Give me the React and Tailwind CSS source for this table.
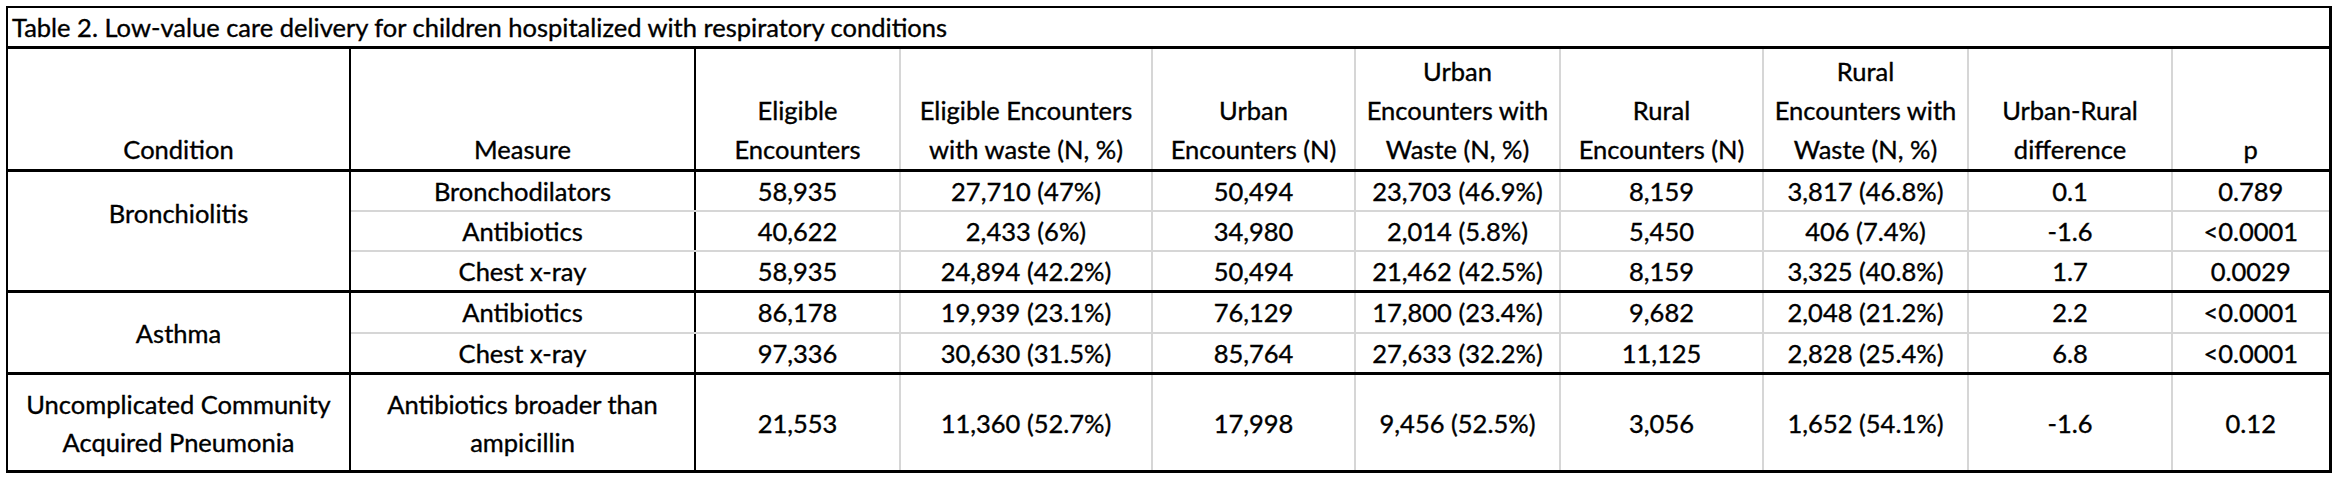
import React from 'react';

const GROUPS = [
  {
    condition: ['Bronchiolitis'],
    top: true,
    rows: [
      [['Bronchodilators'], '58,935', '27,710 (47%)', '50,494', '23,703 (46.9%)', '8,159', '3,817 (46.8%)', '0.1', '0.789'],
      [['Antibiotics'], '40,622', '2,433 (6%)', '34,980', '2,014 (5.8%)', '5,450', '406 (7.4%)', '-1.6', '<0.0001'],
      [['Chest x-ray'], '58,935', '24,894 (42.2%)', '50,494', '21,462 (42.5%)', '8,159', '3,325 (40.8%)', '1.7', '0.0029'],
    ],
    h: 'h-[40px]',
  },
  {
    condition: ['Asthma'],
    rows: [
      [['Antibiotics'], '86,178', '19,939 (23.1%)', '76,129', '17,800 (23.4%)', '9,682', '2,048 (21.2%)', '2.2', '<0.0001'],
      [['Chest x-ray'], '97,336', '30,630 (31.5%)', '85,764', '27,633 (32.2%)', '11,125', '2,828 (25.4%)', '6.8', '<0.0001'],
    ],
    h: 'h-[41px]',
  },
  {
    condition: ['Uncomplicated Community', 'Acquired Pneumonia'],
    rows: [
      [['Antibiotics broader than', 'ampicillin'], '21,553', '11,360 (52.7%)', '17,998', '9,456 (52.5%)', '3,056', '1,652 (54.1%)', '-1.6', '0.12'],
    ],
    h: 'h-[98px]',
  },
];

const HEADERS = [
  ['Condition'],
  ['Measure'],
  ['Eligible', 'Encounters'],
  ['Eligible Encounters', 'with waste (N, %)'],
  ['Urban', 'Encounters (N)'],
  ['Urban', 'Encounters with', 'Waste (N, %)'],
  ['Rural', 'Encounters (N)'],
  ['Rural', 'Encounters with', 'Waste (N, %)'],
  ['Urban-Rural', 'difference'],
  ['p'],
];

const WIDTHS = ['w-[343px]', 'w-[345px]', 'w-[205px]', 'w-[252px]', 'w-[203px]', 'w-[205px]', 'w-[203px]', 'w-[205px]', 'w-[204px]', 'w-[158px]'];

function Lines({ lines }) {
  return lines.map((l, i) => (
    <React.Fragment key={i}>
      {i > 0 && <br />}
      {l}
    </React.Fragment>
  ));
}

export default function App() {
  return (
    <div className="bg-white w-[2338px] h-[488px] pl-[6px] pt-[6px] text-black font-['Lato',sans-serif] text-[25.5px] [-webkit-text-stroke:0.35px_black]">
      <table className="table-fixed border-collapse w-[2325px] border-l-2 border-t-2 border-r-[3px] border-b-[3px] border-black">
        <colgroup>
          {WIDTHS.map((w, i) => (
            <col key={i} className={w} />
          ))}
        </colgroup>
        <tbody>
          {/* title row */}
          <tr className="h-[40px]">
            <td colSpan={10} className="border-b-[3px] border-black pl-[4px] text-left align-middle leading-[38px]">
              Table 2. Low-value care delivery for children hospitalized with respiratory conditions
            </td>
          </tr>

          {/* header */}
          <tr className="h-[123px]">
            {HEADERS.map((h, i) => (
              <td
                key={i}
                className={
                  'align-bottom text-center leading-[39px] border-b-[3px] border-b-black ' +
                  (i < 2 ? 'border-r-2 border-r-black' : 'border-r-2 border-r-[#d6d6d6]')
                }
              >
                <Lines lines={h} />
              </td>
            ))}
          </tr>

          {GROUPS.map((g, gi) =>
            g.rows.map((r, ri) => {
              const last = ri === g.rows.length - 1;
              const bottom = last ? 'border-b-[3px] border-b-black' : 'border-b-2 border-b-[#d6d6d6]';
              return (
                <tr key={gi + '-' + ri} className={g.h}>
                  {ri === 0 && (
                    <td
                      rowSpan={g.rows.length}
                      className={
                        'text-center border-r-2 border-r-black border-b-[3px] border-b-black leading-[38px] ' +
                        (g.top ? 'align-top pt-[22px]' : 'align-middle')
                      }
                    >
                      <Lines lines={g.condition} />
                    </td>
                  )}
                  <td className={'text-center align-middle leading-[38px] border-r-2 border-r-black ' + bottom}>
                    <Lines lines={r[0]} />
                  </td>
                  {r.slice(1).map((v, vi) => (
                    <td
                      key={vi}
                      className={'text-center align-middle leading-[38px] border-r-2 border-r-[#d6d6d6] ' + bottom}
                    >
                      {v}
                    </td>
                  ))}
                </tr>
              );
            })
          )}
        </tbody>
      </table>
    </div>
  );
}
